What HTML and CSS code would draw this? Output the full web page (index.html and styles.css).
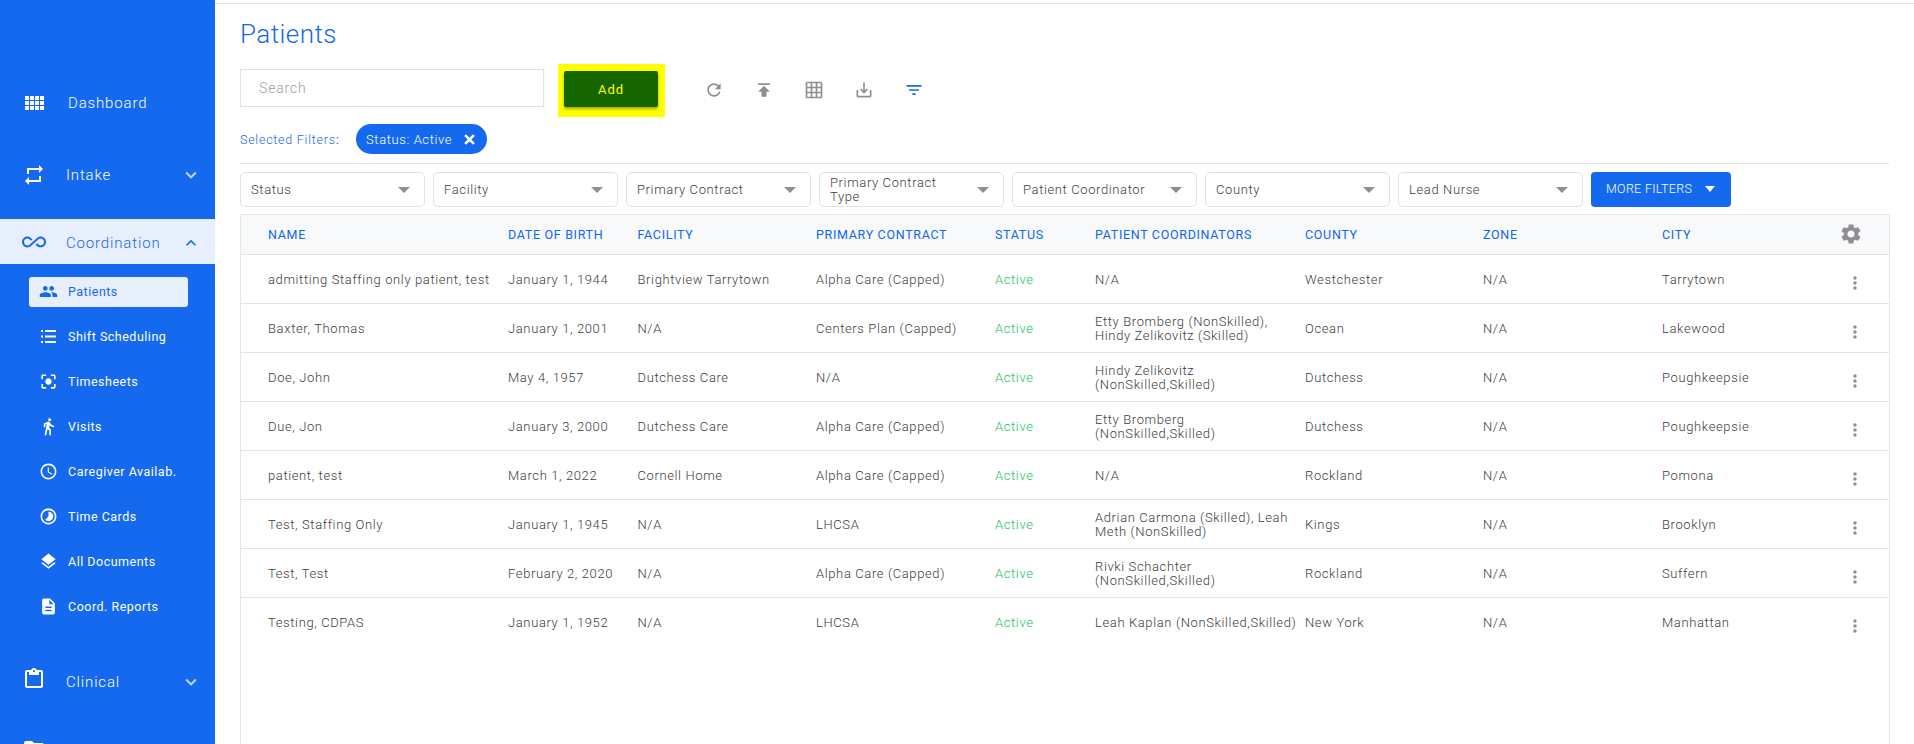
FILE: index.html
```html
<!DOCTYPE html>
<html lang="en">
<head>
<meta charset="utf-8">
<title>Patients</title>
<link rel="stylesheet" href="styles.css">
</head>
<body>
<svg class="sprite" aria-hidden="true">
<symbol id="i-comfy" viewBox="3 5 19 14"><path d="M3 9h4V5H3v4zm0 5h4v-4H3v4zm5 0h4v-4H8v4zm5 0h4v-4h-4v4zM8 9h4V5H8v4zm5-4v4h4V5h-4zm5 9h4v-4h-4v4zM3 19h4v-4H3v4zm5 0h4v-4H8v4zm5 0h4v-4h-4v4zm5 0h4v-4h-4v4zm0-14v4h4V5h-4z"/></symbol>
<symbol id="i-repeat" viewBox="0 0 24 24"><path d="M7 7h10v3l4-4-4-4v3H5v6h2V7zm10 10H7v-3l-4 4 4 4v-3h12v-6h-2v4z"/></symbol>
<symbol id="i-inf" viewBox="0 0 24 24"><path d="M18.6 6.62c-1.44 0-2.8.56-3.77 1.53L12 10.66 10.48 12h.01L7.8 14.39c-.64.64-1.49.99-2.4.99-1.87 0-3.39-1.51-3.39-3.38S3.53 8.62 5.4 8.62c.91 0 1.76.35 2.44 1.03l1.13 1 1.51-1.34L9.22 8.2C8.2 7.18 6.84 6.62 5.4 6.62 2.42 6.62 0 9.04 0 12s2.42 5.38 5.4 5.38c1.44 0 2.8-.56 3.77-1.53l2.83-2.5.01.01L13.52 12h-.01l2.69-2.39c.64-.64 1.49-.99 2.4-.99 1.87 0 3.39 1.51 3.39 3.38s-1.52 3.38-3.39 3.38c-.9 0-1.76-.35-2.44-1.03l-1.14-1.01-1.51 1.34 1.27 1.12c1.02 1.01 2.37 1.57 3.82 1.57 2.98 0 5.4-2.41 5.4-5.38s-2.42-5.37-5.4-5.37z"/></symbol>
<symbol id="i-people" viewBox="0 0 24 24"><path d="M16 11c1.66 0 2.99-1.34 2.99-3S17.66 5 16 5c-1.66 0-3 1.34-3 3s1.34 3 3 3zm-8 0c1.66 0 2.99-1.34 2.99-3S9.66 5 8 5C6.34 5 5 6.34 5 8s1.34 3 3 3zm0 2c-2.33 0-7 1.17-7 3.5V19h14v-2.5c0-2.33-4.67-3.5-7-3.5zm8 0c-.29 0-.62.02-.97.05 1.16.84 1.97 1.97 1.97 3.45V19h6v-2.5c0-2.33-4.67-3.5-7-3.5z"/></symbol>
<symbol id="i-list" viewBox="0 0 15 13"><path d="M0 0h2v2H0zM0 5.5h2v2H0zM0 11h2v2H0zM4 0h11v2H4zM4 5.5h11v2H4zM4 11h11v2H4z"/></symbol>
<symbol id="i-focus" viewBox="0 0 24 24"><path d="M12 8c-2.21 0-4 1.79-4 4s1.79 4 4 4 4-1.79 4-4-1.79-4-4-4zm-7 7H3v4c0 1.1.9 2 2 2h4v-2H5v-4zM5 5h4V3H5c-1.1 0-2 .9-2 2v4h2V5zm14-2h-4v2h4v4h2V5c0-1.1-.9-2-2-2zm0 16h-4v2h4c1.1 0 2-.9 2-2v-4h-2v4z"/></symbol>
<symbol id="i-walk" viewBox="0 0 24 24"><path d="M13.5 5.5c1.1 0 2-.9 2-2s-.9-2-2-2-2 .9-2 2 .9 2 2 2zM9.8 8.9L7 23h2.1l1.8-8 2.1 2v6h2v-7.5l-2.1-2 .6-3C14.8 12 16.8 13 19 13v-2c-1.9 0-3.5-1-4.3-2.4l-1-1.6c-.4-.6-1-1-1.7-1-.3 0-.5.1-.8.1L6 8.3V13h2V9.6l1.8-.7"/></symbol>
<symbol id="i-clock" viewBox="0 0 24 24"><path d="M11.99 2C6.47 2 2 6.48 2 12s4.47 10 9.99 10C17.52 22 22 17.52 22 12S17.52 2 11.99 2zM12 20c-4.42 0-8-3.58-8-8s3.58-8 8-8 8 3.58 8 8-3.58 8-8 8zm.5-13H11v6l5.25 3.15.75-1.23-4.5-2.67z"/></symbol>
<symbol id="i-lapse" viewBox="0 0 24 24"><path d="M16.24 7.76C15.07 6.59 13.54 6 12 6v6l-4.24 4.24c2.34 2.34 6.14 2.34 8.49 0 2.34-2.34 2.34-6.14-.01-8.48zM12 2C6.48 2 2 6.48 2 12s4.48 10 10 10 10-4.48 10-10S17.52 2 12 2zm0 18c-4.42 0-8-3.58-8-8s3.58-8 8-8 8 3.58 8 8-3.58 8-8 8z"/></symbol>
<symbol id="i-layers" viewBox="0 0 24 24"><path d="M11.99 18.54l-7.37-5.73L3 14.07l9 7 9-7-1.63-1.27-7.38 5.74zM12 16l7.36-5.73L21 9l-9-7-9 7 1.63 1.27L12 16z"/></symbol>
<symbol id="i-doc" viewBox="0 0 24 24"><path d="M14 2H6c-1.1 0-1.99.9-1.99 2L4 20c0 1.1.89 2 1.99 2H18c1.1 0 2-.9 2-2V8l-6-6zm2 16H8v-2h8v2zm0-4H8v-2h8v2zm-3-5V3.5L18.5 9H13z"/></symbol>
<symbol id="i-clip" viewBox="0 0 24 24"><path d="M19 3h-4.18C14.4 1.84 13.3 1 12 1s-2.4.84-2.82 2H5c-1.1 0-2 .9-2 2v14c0 1.1.9 2 2 2h14c1.1 0 2-.9 2-2V5c0-1.1-.9-2-2-2zm-7 0c.55 0 1 .45 1 1s-.45 1-1 1-1-.45-1-1 .45-1 1-1zm7 16H5V5h2v3h10V5h2v14z"/></symbol>
<symbol id="i-folder" viewBox="0 0 24 24"><path d="M10 4H4c-1.1 0-2 .9-2 2v12c0 1.1.9 2 2 2h16c1.1 0 2-.9 2-2V8c0-1.1-.9-2-2-2h-8l-2-2z"/></symbol>
<symbol id="i-down" viewBox="0 0 24 24"><path d="M16.59 8.59L12 13.17 7.41 8.59 6 10l6 6 6-6z"/></symbol>
<symbol id="i-up" viewBox="0 0 24 24"><path d="M12 8l-6 6 1.41 1.41L12 10.83l4.59 4.58L18 14z"/></symbol>
<symbol id="i-refresh" viewBox="0 0 24 24"><path d="M17.65 6.35C16.2 4.9 14.21 4 12 4c-4.42 0-7.99 3.58-7.99 8s3.57 8 7.99 8c3.73 0 6.84-2.55 7.73-6h-2.08c-.82 2.33-3.04 4-5.65 4-3.31 0-6-2.69-6-6s2.69-6 6-6c1.66 0 3.14.69 4.22 1.78L13 11h7V4l-2.35 2.35z"/></symbol>
<symbol id="i-publish" viewBox="0 0 24 24"><path d="M5 4v2h14V4H5zm0 10h4v6h6v-6h4l-7-7-7 7z"/></symbol>
<symbol id="i-grid" viewBox="0 0 24 24"><path d="M20 2H4c-1.1 0-2 .9-2 2v16c0 1.1.9 2 2 2h16c1.1 0 2-.9 2-2V4c0-1.1-.9-2-2-2zM8 20H4v-4h4v4zm0-6H4v-4h4v4zm0-6H4V4h4v4zm6 12h-4v-4h4v4zm0-6h-4v-4h4v4zm0-6h-4V4h4v4zm6 12h-4v-4h4v4zm0-6h-4v-4h4v4zm0-6h-4V4h4v4z"/></symbol>
<symbol id="i-save" viewBox="0 0 24 24"><path d="M19 12v7H5v-7H3v7c0 1.1.9 2 2 2h14c1.1 0 2-.9 2-2v-7h-2zm-6 .67l2.59-2.58L17 11.5l-5 5-5-5 1.41-1.41L11 12.67V3h2z"/></symbol>
<symbol id="i-filter" viewBox="0 0 24 24"><path d="M10 18h4v-2h-4v2zM3 6v2h18V6H3zm3 7h12v-2H6v2z"/></symbol>
<symbol id="i-close" viewBox="0 0 24 24"><path d="M19 6.41L17.59 5 12 10.59 6.41 5 5 6.41 10.59 12 5 17.59 6.41 19 12 13.41 17.59 19 19 17.59 13.41 12z" stroke="currentColor" stroke-width="2"/></symbol>
<symbol id="i-gear" viewBox="0 0 24 24"><path d="M19.14 12.94c.04-.3.06-.61.06-.94 0-.32-.02-.64-.07-.94l2.03-1.58c.18-.14.23-.41.12-.61l-1.92-3.32c-.12-.22-.37-.29-.59-.22l-2.39.96c-.5-.38-1.03-.7-1.62-.94l-.36-2.54c-.04-.24-.24-.41-.48-.41h-3.84c-.24 0-.43.17-.47.41l-.36 2.54c-.59.24-1.13.57-1.62.94l-2.39-.96c-.22-.08-.47 0-.59.22L2.74 8.87c-.12.21-.08.47.12.61l2.03 1.58c-.05.3-.09.63-.09.94s.02.64.07.94l-2.03 1.58c-.18.14-.23.41-.12.61l1.92 3.32c.12.22.37.29.59.22l2.39-.96c.5.38 1.03.7 1.62.94l.36 2.54c.05.24.24.41.48.41h3.84c.24 0 .44-.17.47-.41l.36-2.54c.59-.24 1.13-.56 1.62-.94l2.39.96c.22.08.47 0 .59-.22l1.92-3.32c.12-.22.07-.47-.12-.61l-2.01-1.58zM12 15.6c-1.98 0-3.6-1.62-3.6-3.6s1.62-3.6 3.6-3.6 3.6 1.62 3.6 3.6-1.62 3.6-3.6 3.6z"/></symbol>
<symbol id="i-more" viewBox="0 0 24 24"><path d="M12 8c1.1 0 2-.9 2-2s-.9-2-2-2-2 .9-2 2 .9 2 2 2zm0 2c-1.1 0-2 .9-2 2s.9 2 2 2 2-.9 2-2-.9-2-2-2zm0 6c-1.1 0-2 .9-2 2s.9 2 2 2 2-.9 2-2-.9-2-2-2z"/></symbol>
</svg>

<div class="app">
  <aside class="sidebar">
    <a class="nav-item nav-dash"><svg class="nav-icon comfy"><use href="#i-comfy"/></svg><span class="nav-label dash-label">Dashboard</span></a>
    <a class="nav-item"><svg class="nav-icon"><use href="#i-repeat"/></svg><span class="nav-label">Intake</span><svg class="chev"><use href="#i-down"/></svg></a>
    <a class="nav-open"><svg class="nav-icon inf"><use href="#i-inf"/></svg><span class="nav-label">Coordination</span><svg class="chev"><use href="#i-up"/></svg></a>
    <ul class="subnav">
      <li class="sub-item"><a class="sub-link current"><svg class="sub-icon"><use href="#i-people"/></svg>Patients</a></li>
      <li class="sub-item"><a class="sub-link"><svg class="sub-icon sub-list"><use href="#i-list"/></svg>Shift Scheduling</a></li>
      <li class="sub-item"><a class="sub-link"><svg class="sub-icon"><use href="#i-focus"/></svg>Timesheets</a></li>
      <li class="sub-item"><a class="sub-link"><svg class="sub-icon"><use href="#i-walk"/></svg>Visits</a></li>
      <li class="sub-item"><a class="sub-link"><svg class="sub-icon"><use href="#i-clock"/></svg>Caregiver Availab.</a></li>
      <li class="sub-item"><a class="sub-link"><svg class="sub-icon"><use href="#i-lapse"/></svg>Time Cards</a></li>
      <li class="sub-item"><a class="sub-link"><svg class="sub-icon"><use href="#i-layers"/></svg>All Documents</a></li>
      <li class="sub-item"><a class="sub-link"><svg class="sub-icon"><use href="#i-doc"/></svg>Coord. Reports</a></li>
    </ul>
    <a class="nav-item nav-clinical"><svg class="nav-icon"><use href="#i-clip"/></svg><span class="nav-label">Clinical</span><svg class="chev"><use href="#i-down"/></svg></a>
    <a class="nav-item nav-folder"><svg class="nav-icon"><use href="#i-folder"/></svg></a>
  </aside>

  <main class="main">
    <h1 class="title">Patients</h1>
    <div class="toolbar">
      <input class="search" type="text" placeholder="Search">
      <div class="add-wrap"><button class="add-btn">Add</button></div>
      <div class="tools">
        <svg class="tool"><use href="#i-refresh"/></svg>
        <svg class="tool"><use href="#i-publish"/></svg>
        <svg class="tool"><use href="#i-grid"/></svg>
        <svg class="tool"><use href="#i-save"/></svg>
        <svg class="tool tool-on"><use href="#i-filter"/></svg>
      </div>
    </div>
    <div class="selected">
      <span class="selected-label">Selected Filters<b>:</b></span>
      <span class="chip">Status: Active<svg class="chip-x"><use href="#i-close"/></svg></span>
    </div>
    <div class="filters">
      <div class="select"><span>Status</span></div>
      <div class="select"><span>Facility</span></div>
      <div class="select"><span>Primary Contract</span></div>
      <div class="select"><span>Primary Contract Type</span></div>
      <div class="select"><span>Patient Coordinator</span></div>
      <div class="select"><span>County</span></div>
      <div class="select"><span>Lead Nurse</span></div>
      <button class="more-btn">MORE FILTERS<i class="more-caret"></i></button>
    </div>
    <div class="table-box">
      <table class="table">
        <colgroup>
          <col class="c-name"><col class="c-dob"><col class="c-fac"><col class="c-pri"><col class="c-sta"><col class="c-pc"><col class="c-cou"><col class="c-zon"><col class="c-cit"><col class="c-act">
        </colgroup>
        <thead>
          <tr><th>NAME</th><th>DATE OF BIRTH</th><th>FACILITY</th><th>PRIMARY CONTRACT</th><th>STATUS</th><th>PATIENT COORDINATORS</th><th>COUNTY</th><th>ZONE</th><th>CITY</th><th class="act"><svg class="gear"><use href="#i-gear"/></svg></th></tr>
        </thead>
        <tbody>
          <tr><td>admitting Staffing only patient, test</td><td>January 1, 1944</td><td>Brightview Tarrytown</td><td>Alpha Care (Capped)</td><td class="active">Active</td><td>N/A</td><td>Westchester</td><td>N/A</td><td>Tarrytown</td><td class="act"><svg class="more"><use href="#i-more"/></svg></td></tr>
          <tr><td>Baxter, Thomas</td><td>January 1, 2001</td><td>N/A</td><td>Centers Plan (Capped)</td><td class="active">Active</td><td>Etty Bromberg (NonSkilled),<br>Hindy Zelikovitz (Skilled)</td><td>Ocean</td><td>N/A</td><td>Lakewood</td><td class="act"><svg class="more"><use href="#i-more"/></svg></td></tr>
          <tr><td>Doe, John</td><td>May 4, 1957</td><td>Dutchess Care</td><td>N/A</td><td class="active">Active</td><td>Hindy Zelikovitz<br>(NonSkilled,Skilled)</td><td>Dutchess</td><td>N/A</td><td>Poughkeepsie</td><td class="act"><svg class="more"><use href="#i-more"/></svg></td></tr>
          <tr><td>Due, Jon</td><td>January 3, 2000</td><td>Dutchess Care</td><td>Alpha Care (Capped)</td><td class="active">Active</td><td>Etty Bromberg<br>(NonSkilled,Skilled)</td><td>Dutchess</td><td>N/A</td><td>Poughkeepsie</td><td class="act"><svg class="more"><use href="#i-more"/></svg></td></tr>
          <tr><td>patient, test</td><td>March 1, 2022</td><td>Cornell Home</td><td>Alpha Care (Capped)</td><td class="active">Active</td><td>N/A</td><td>Rockland</td><td>N/A</td><td>Pomona</td><td class="act"><svg class="more"><use href="#i-more"/></svg></td></tr>
          <tr><td>Test, Staffing Only</td><td>January 1, 1945</td><td>N/A</td><td>LHCSA</td><td class="active">Active</td><td>Adrian Carmona (Skilled), Leah<br>Meth (NonSkilled)</td><td>Kings</td><td>N/A</td><td>Brooklyn</td><td class="act"><svg class="more"><use href="#i-more"/></svg></td></tr>
          <tr><td>Test, Test</td><td>February 2, 2020</td><td>N/A</td><td>Alpha Care (Capped)</td><td class="active">Active</td><td>Rivki Schachter<br>(NonSkilled,Skilled)</td><td>Rockland</td><td>N/A</td><td>Suffern</td><td class="act"><svg class="more"><use href="#i-more"/></svg></td></tr>
          <tr><td>Testing, CDPAS</td><td>January 1, 1952</td><td>N/A</td><td>LHCSA</td><td class="active">Active</td><td>Leah Kaplan (NonSkilled,Skilled)</td><td>New York</td><td>N/A</td><td>Manhattan</td><td class="act"><svg class="more"><use href="#i-more"/></svg></td></tr>
        </tbody>
      </table>
    </div>
  </main>
</div>
</body>
</html>
```
FILE: styles.css
```css
* { box-sizing: border-box; }
html, body { margin: 0; height: 100%; overflow: hidden; background: #fff; }
body { font-family: Roboto, "Liberation Sans", sans-serif; font-size: 13px; font-weight: 300; letter-spacing: .62px; color: #3c3c3c; }
.sprite { display: none; }
svg { fill: currentColor; display: block; flex: none; }

.app { display: flex; height: 744px; overflow: hidden; }

/* Sidebar */
.sidebar { width: 215px; flex: none; height: 744px; overflow: hidden; background: #1469ee; color: #fff; padding-top: 67px; }
.nav-item { display: flex; align-items: center; height: 72px; padding-left: 22px; }
.nav-dash .nav-label { margin-left: 24px; }
.nav-icon { width: 24px; height: 24px; }
.comfy { width: 19px; height: 14px; margin-left: 3px; }
.nav-label { font-size: 15px; letter-spacing: .85px; margin-left: 20px; flex: 1; }
.chev { width: 22px; height: 22px; margin-right: 13px; opacity: .75; }
.nav-open { display: flex; align-items: center; height: 45px; margin-top: 8px; padding-left: 22px; background: #e7effc; color: #1469ee; }
.nav-open .nav-label { padding-top: 3px; }
.nav-open .chev { opacity: 1; padding-top: 2px; }
.subnav { list-style: none; margin: 5px 0 17px; padding: 0; }
.sub-item { height: 45px; display: flex; align-items: center; padding-left: 29px; }
.sub-link { display: flex; align-items: center; width: 159px; height: 30px; padding-left: 10px; font-size: 12.5px; font-weight: 400; letter-spacing: .5px; border-radius: 3px; }
.sub-link.current { background: #e7effc; color: #1469ee; }
.sub-icon { width: 19px; height: 19px; margin-right: 10px; }
.sub-list { width: 15px; height: 13px; margin: 0 12px 0 2px; }
.nav-clinical .nav-icon { margin-top: -6px; }
.nav-folder { align-items: flex-start; }
.nav-folder .nav-icon { margin-top: 19px; }

/* Main */
.main { flex: 1; min-width: 0; border-top: 1px solid #e3e3e3; margin-top: 3px; padding: 0 25px; }
.title { margin: 0; font-size: 26px; font-weight: 300; letter-spacing: .45px; line-height: 30px; color: #1469ee; padding-top: 15px; height: 60px; }
.toolbar { display: flex; align-items: flex-start; height: 53px; }
.search { width: 304px; height: 38px; margin-top: 5px; border: 1px solid #e2e2e2; padding: 0 18px 0; font: inherit; font-size: 14px; letter-spacing: .85px; color: #555; outline: none; }
.search::placeholder { color: #a0a0a0; }
.add-wrap { width: 107px; height: 53px; margin-left: 14px; padding: 7px 0 0 6px; background: #ff0; }
.add-btn { display: block; width: 94px; height: 36px; border: 0; border-radius: 2px; background: #166600; color: #ff0; font: inherit; font-weight: 400; letter-spacing: 1px; box-shadow: 0 2px 3px rgba(0,0,0,.35); }
.tools { display: flex; align-items: center; gap: 30px; margin: 16px 0 0 39px; color: #8f8f92; }
.tool { width: 20px; height: 20px; }
.tool-on { color: #1469ee; }

.selected { display: flex; align-items: center; height: 30px; margin-top: 7px; }
.selected-label { color: #1469ee; font-size: 12.5px; font-weight: 300; letter-spacing: .75px; width: 116px; }
.chip { display: inline-flex; align-items: center; justify-content: space-between; width: 131px; height: 30px; border-radius: 15px; background: #1469ee; color: #fff; padding: 0 10px; }
.chip-x { width: 15px; height: 15px; }

.filters { display: grid; grid-template-columns: repeat(7, 185px) 140px; column-gap: 8px; align-items: stretch; height: 45px; margin-top: 9px; padding-top: 8px; border-top: 1px solid #e3e3e3; }
.select { position: relative; display: flex; align-items: center; height: 35px; border: 1px solid #e2e2e2; border-radius: 5px; padding: 0 46px 0 10px; line-height: 14px; }
.select::after { content: ""; position: absolute; right: 14px; top: 14px; border-left: 6px solid transparent; border-right: 6px solid transparent; border-top: 6px solid #8f8f92; }
.more-btn { display: flex; align-items: center; justify-content: flex-start; gap: 13px; height: 35px; padding: 0 0 2px 15px; border: 0; border-radius: 4px; background: #1469ee; color: #fff; font: inherit; font-size: 12.5px; letter-spacing: .3px; }
.more-caret { border-left: 5.5px solid transparent; border-right: 5.5px solid transparent; border-top: 6px solid #fff; }

.table-box { margin-top: 6px; height: 560px; width: 1650px; border: 1px solid #e6e6e6; border-bottom: 0; }
.table { width: 100%; table-layout: fixed; border-collapse: collapse; }
.c-name { width: 267px; } .c-dob { width: 129.5px; } .c-fac { width: 178.5px; } .c-pri { width: 179px; } .c-sta { width: 100px; } .c-pc { width: 210px; } .c-cou { width: 178px; } .c-zon { width: 179px; } .c-cit { width: 178px; } .c-act { width: auto; }
.table th { height: 39px; background: #f8f9fb; color: #0f66f0; font-weight: 400; font-size: 12.5px; letter-spacing: .68px; text-align: left; padding: 0; border-bottom: 1px solid #e3e3e3; }
.table td { height: 49px; padding: 2px 0 0; line-height: 14px; border-bottom: 1px solid #e3e3e3; }
.table tbody tr:last-child td { border-bottom: 0; }
.table th:first-child, .table td:first-child { padding-left: 27px; }
.table td.active { color: #1cc45a; }
.gear { width: 24px; height: 24px; color: #8f8f92; margin-left: -1px; }
.more { width: 20px; height: 20px; color: #8f8f92; margin: 7px 0 0 5px; }
```
